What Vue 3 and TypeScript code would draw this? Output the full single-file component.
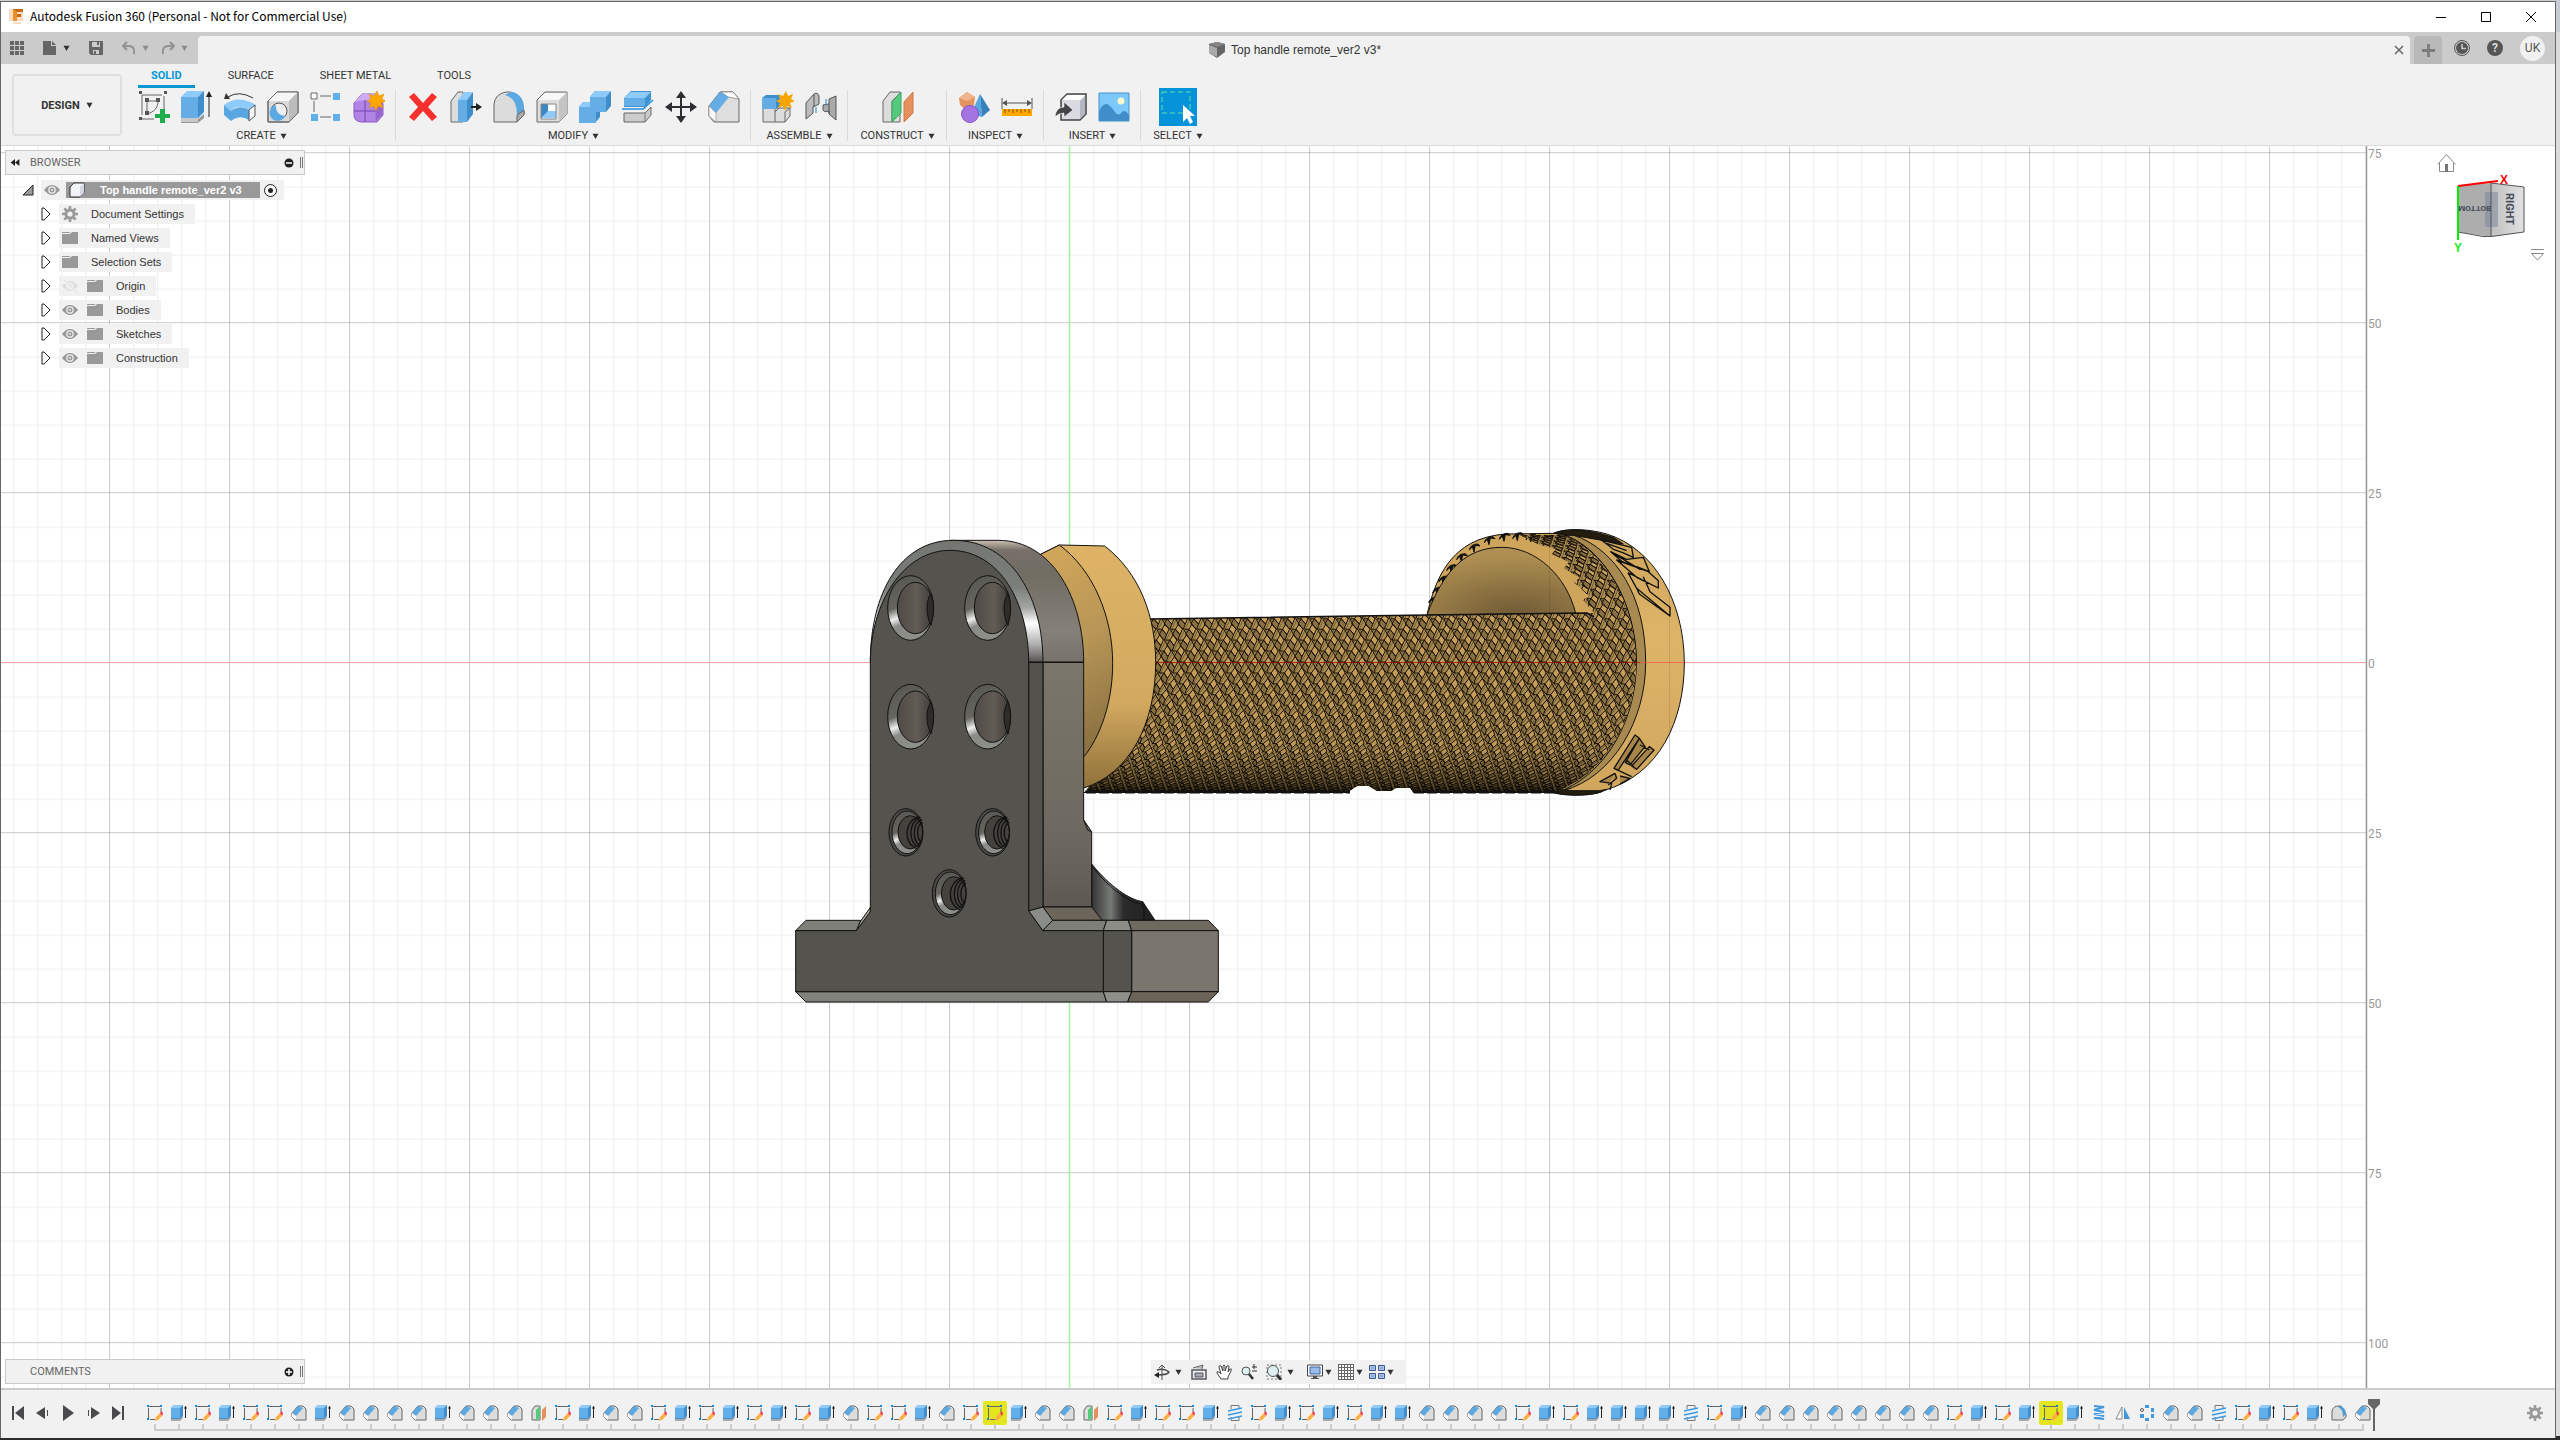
<script setup lang="ts">
interface Tool { id: string; label: string }
interface Group { name: string; tools: Tool[] }
interface TreeRow { label: string; eye: '' | 'eye' | 'eye-off'; icon: string }

const tabs: string[] = ['SOLID', 'SURFACE', 'SHEET METAL', 'TOOLS']

const t = (id: string, label: string): Tool => ({ id, label })
const groups: Group[] = [
  { name: 'CREATE', tools: [t('sketch', 'Create Sketch'), t('extrude', 'Extrude'), t('revolve', 'Revolve'), t('hole', 'Hole'), t('pattern', 'Rectangular Pattern'), t('form', 'Create Form')] },
  { name: 'MODIFY', tools: [t('delete', 'Delete'), t('presspull', 'Press Pull'), t('fillet', 'Fillet'), t('shell', 'Shell'), t('combine', 'Combine'), t('split', 'Split Body'), t('move', 'Move/Copy'), t('chamfer', 'Chamfer')] },
  { name: 'ASSEMBLE', tools: [t('component', 'New Component'), t('joint', 'Joint')] },
  { name: 'CONSTRUCT', tools: [t('plane', 'Offset Plane')] },
  { name: 'INSPECT', tools: [t('solids', 'Interference'), t('measure', 'Measure')] },
  { name: 'INSERT', tools: [t('derive', 'Insert Derive'), t('picture', 'Canvas')] },
  { name: 'SELECT', tools: [t('select', 'Select')] },
]

const rows: TreeRow[] = [
  { label: 'Document Settings', eye: '', icon: 'gear' },
  { label: 'Named Views', eye: '', icon: 'folder' },
  { label: 'Selection Sets', eye: '', icon: 'folder' },
  { label: 'Origin', eye: 'eye-off', icon: 'folder' },
  { label: 'Bodies', eye: 'eye', icon: 'folder' },
  { label: 'Sketches', eye: 'eye', icon: 'folder' },
  { label: 'Construction', eye: 'eye', icon: 'folder' },
]

const kinds: Record<string, string> = {
  S: 't-sketch', H: 't-sketch', E: 't-extrude', C: 't-chamfer', P: 't-plane',
  T: 't-thread', O: 't-coil', M: 't-mirror', R: 't-circular', F: 't-fillet',
}
const features: string[] = [
  ...('SESESSCECCCCECCCPSECCSESESESEC' + 'SSECSHECCPSESSETSESESEECCCCSESEEEETS' + 'ECCCCCCCCSESEHEOMRCCTSESEFC'),
]

const ruler: { y: number; text: string }[] = ['75', '50', '25', '0', '25', '50', '75', '100'].map((text, i) => ({ text, y: 152 + i * 170 }))

// Diamond knurl wrapped around the grip: rows follow the cylinder's curvature.
const radius = 131
const step = 0.084
const pitch = 13.4
const rowAt = (j: number) => {
  const a = Math.max(-1.57, Math.min(1.57, j * step))
  return { y: 662 + radius * Math.sin(a), dx: -68 * (1 - Math.cos(a)) }
}
const p = (x: number, y: number): string => `${x.toFixed(1)} ${y.toFixed(1)}`
let edges = ''
let lights = ''
let darks = ''
let seams = ''
for (let j = -18; j <= 18; j++) {
  const up = rowAt(j - 1)
  const mid = rowAt(j)
  const low = rowAt(j + 1)
  for (let i = 0; i < 44; i++) {
    const base = 1080 + i * pitch + (j % 2 ? pitch / 2 : 0)
    const x = base + mid.dx
    const y = mid.y
    const yt = (up.y + y) / 2
    const yb = (low.y + y) / 2
    const xt = base + (up.dx + mid.dx) / 2 + 1
    const xb = base + (low.dx + mid.dx) / 2 + 1
    const left = p(x - 3, y)
    const right = p(x + 4, y)
    const diamond = `M${left}L${p(xt, yt)}L${right}L${p(xb, yb)}Z`
    const shade = `M${left}L${p(xb, yb)}L${p(xb - 2, low.y)}L${p(x - 6, yb)}Z`
    lights += diamond
    darks += shade
    edges += `${diamond}${shade}M${left}L${p(x - 7, y)}M${p(xt, yt)}L${p(xt - 3, up.y)}`
    seams += `M${p(x + 6.7, y)}L${p(base + low.dx, low.y)}L${p(x - 6.7, y)}`
  }
}

const teeth = [[-22, 235], [-10, 205], [8, 172], [32, 138], [62, 105], [100, 76], [145, 54], [190, 44], [230, 42], [270, 46], [306, 56]]
const bores = [[392, 294], [623, 294], [392, 620], [623, 620]]
const threads = [[378, 967], [638, 967], [508, 1150]]
</script>

<template>
  <div class="desktop">
    <svg class="sprite" width="0" height="0" aria-hidden="true">
      <defs>
        <symbol id="sketch" viewBox="0 0 32 32"><path d="M4 4H26V22M4 4V28H16" fill="none" stroke="#666" stroke-dasharray="20 3" /><path d="M9 10H20C20 17 16 21 9 23Z" fill="none" stroke="#666" /><path d="M1 0h3v3H1zM26 0h3v3h-3zM1 26h3v3H1zM7 7h4v4H7zM18 7h4v4h-4zM7 20h4v4H7z" fill="#555" /><path d="M22 18h5v5h5v4h-5v5h-5v-5h-5v-4h5z" fill="#1fae4c" /></symbol>
        <symbol id="extrude" viewBox="0 0 32 32"><path d="M0 28h17l6-5v4l-6 5H0z" fill="#999" /><path d="M0 27h17v4H0z" fill="#c9c9c9" /><path d="M0 6l6-6h17l-6 6z" fill="#8fcbfa" /><path d="M0 6h17v21H0z" fill="#64ade5" /><path d="M17 6l6-6v21l-6 6z" fill="#3f8ecb" /><path d="M28 26V4" stroke="#222" /><path d="M28 0l3 6h-6z" fill="#222" /></symbol>
        <symbol id="revolve" viewBox="0 0 32 32"><path d="M4 6Q15-1 29 7" fill="none" stroke="#333" /><path d="M0 8l2-6 4 6z" fill="#333" /><path d="M0 14Q14 3 32 14L25 19Q14 12 7 20Z" fill="#8fcbfa" /><path d="M0 14l7 6v10l-7-6zM7 20Q16 13 25 19V29Q16 23 7 30Z" fill="#5aa6e0" /><path d="M25 19l6-5v11l-6 5z" fill="#f5f5f5" stroke="#555" /></symbol>
        <symbol id="hole" viewBox="0 0 32 32"><path d="M1 10L10 1H31V22L22 31H1Z" fill="#d9d9d9" stroke="#666" /><path d="M1 10L10 1H31L22 10Z" fill="#f6f6f6" /><path d="M22 10l9-9v21l-9 9z" fill="#bbb" /><path d="M1 10L10 1H31V22L22 31H1Z" fill="none" stroke="#666" /><circle cx="12" cy="20" r="8" fill="#eee" stroke="#555" /><path d="M9 14a8 8 0 1 0 9 11Q8 24 9 14z" fill="#5ba8e2" /></symbol>
        <symbol id="pattern" viewBox="0 0 32 32"><path d="M10 5H21M4 10V21M10 26H21" stroke="#666" fill="none" /><path d="M1 2h6v6H1z" fill="#fff" stroke="#666" /><path d="M23 2h7v7h-7zM1 23h7v7H1zM23 23h7v7h-7z" fill="#5fb0ea" /></symbol>
        <symbol id="form" viewBox="0 0 32 32"><path d="M1 12L9 3H22Q30 6 30 14V24L24 31H8Q1 30 1 24Z" fill="#b183e4" stroke="#8d5bc7" /><path d="M2 11L9 3H23L18 10Q8 8 2 11Z" fill="#d0abf5" /><path d="M22 12l7-5v17l-6 6z" fill="#9665d0" /><path d="M12 9V31M1 20H23" stroke="#7444b4" /><path d="M24 0l2 5 5-2-2 5 4 2-5 2 2 5-5-2-2 5-2-5-5 2 2-5-4-2 4-2-2-5 5 2z" fill="#ffa600" stroke="#d98c00" stroke-width=".5" /></symbol>
        <symbol id="delete" viewBox="0 0 32 32"><path d="M2 6l5-4 9 10 9-10 5 4-9 10 9 10-5 4-9-10-9 10-5-4 9-10z" fill="#f5302d" /></symbol>
        <symbol id="presspull" viewBox="0 0 32 32"><path d="M1 10L8 1H13V31H1Z" fill="#ddd" stroke="#666" /><path d="M8 9l6-8h9l-6 8z" fill="#8fcbfa" /><path d="M8 9h9v22H8z" fill="#64ade5" /><path d="M17 9l6-8v22l-6 8z" fill="#3f8ecb" /><path d="M21 16h7" stroke="#222" stroke-width="2" /><path d="M26 12l6 4-6 4z" fill="#222" /></symbol>
        <symbol id="fillet" viewBox="0 0 32 32"><path d="M1 13Q2 3 13 1H18L31 20V23L24 31H1Z" fill="#dcdcdc" stroke="#666" /><path d="M12 4Q16 1 20 1Q32 5 31 20L24 24Q24 7 12 4Z" fill="#5ba8e2" /><path d="M24 24l7-5v5l-7 7z" fill="#aaa" stroke="#666" /></symbol>
        <symbol id="shell" viewBox="0 0 32 32"><path d="M1 9L9 1H31V23L23 31H1Z" fill="#ddd" stroke="#666" /><path d="M23 9l8-8v22l-8 8z" fill="#c4c4c4" /><path d="M2 9L9 2H30L23 9Z" fill="#f7f7f7" /><path d="M5 13h15v15H5z" fill="#fff" /><path d="M5 13h7v8l-7 7z" fill="#3c87c3" /><path d="M5 27l7-7h8v7z" fill="#8fcbfa" /><path d="M5 13h15v15H5z" fill="none" stroke="#888" /></symbol>
        <symbol id="combine" viewBox="0 0 32 32"><path d="M0 16l4-5h7V6l5-6h16v15l-5 6h-6v5l-5 6H0z" fill="#3f8ecb" /><path d="M0 16h11V6h16v15H17v11H0z" fill="#64ade5" /><path d="M11 6l5-6h16l-5 6zM0 16l4-5h7v5z" fill="#8fcbfa" /></symbol>
        <symbol id="split" viewBox="0 0 32 32"><path d="M2 7l7-7h20v9l-6 7H2z" fill="#4192d0" /><path d="M2 7h21v8H2z" fill="#64ade5" /><path d="M2 7l7-6h20l-6 6z" fill="#8fcbfa" /><path d="M0 18H21L31 9M0 19" fill="none" stroke="#1e8fe0" stroke-width="1.5" /><path d="M2 22H23L29 16V24L23 31H2Z" fill="#ccc" stroke="#666" /><path d="M23 22V31" stroke="#777" /></symbol>
        <symbol id="move" viewBox="0 0 32 32"><path d="M16 3V29M3 16H29" stroke="#2f2f33" stroke-width="2" /><path d="M16 0l5 7H11zM16 32l5-7H11zM0 16l7-5v10zM32 16l-7-5v10z" fill="#2f2f33" /></symbol>
        <symbol id="chamfer" viewBox="0 0 32 32"><path d="M1 15L12 1H25L31 8V31H6L1 25Z" fill="#dedede" stroke="#666" /><path d="M13 1H25L31 8L20 6Z" fill="#fff" stroke="#666" stroke-width=".6" /><path d="M1 15L12 1L21 6L8 22Z" fill="#64ade5" /><path d="M1 15l7 7v9l-7-6z" fill="#f8f8f8" stroke="#888" stroke-width=".6" /></symbol>
        <symbol id="component" viewBox="0 0 32 32"><path d="M1 17H28V25L23 31H1Z" fill="#ddd" stroke="#666" /><path d="M13 17V31M13 21l4-4M23 31V21l5-4" stroke="#666" fill="none" /><path d="M0 7l4-3h14v11l-4 3H0z" fill="#3f8ecb" /><path d="M0 7h14v11H0z" fill="#64ade5" /><path d="M24 0l2 5 5-2-2 5 4 2-5 2 2 5-5-2-2 5-2-5-5 2 2-5-4-2 4-2-2-5 5 2z" fill="#f7a400" /></symbol>
        <symbol id="joint" viewBox="0 0 32 32"><path d="M1 12L9 3Q13 1 14 5V13L8 16V22L1 28Z" fill="#bcbcbc" stroke="#555" /><path d="M31 5V29L24 23V20Q18 22 18 18V14L24 13V8Z" fill="#aaa" stroke="#555" /><path d="M9 4v12M24 13v10" stroke="#555" /><path d="M11 16v6M21 8v6" stroke="#168dde" /></symbol>
        <symbol id="plane" viewBox="0 0 32 32"><path d="M1 10L8 1H18V31H1Z" fill="#ddd" stroke="#666" /><path d="M10 10V31M10 10L18 2" stroke="#777" fill="none" /><path d="M10 11L19 1V22L10 31Z" fill="#57c97d" stroke="#34a85c" /><path d="M22 11L31 1V22L22 31Z" fill="#e6915d" stroke="#cc7843" /></symbol>
        <symbol id="solids" viewBox="0 0 32 32"><path d="M1 7L9 1L17 6L16 14L8 19L2 14Z" fill="#e59360" /><path d="M1 7l8-6 8 5-8 4z" fill="#f2b48c" /><path d="M22 3L13 23L24 26Z" fill="#58a6df" /><path d="M22 3l10 16-8 7z" fill="#3681bd" /><circle cx="12" cy="23" r="8.5" fill="#a475e0" stroke="#8754c5" /></symbol>
        <symbol id="measure" viewBox="0 0 32 32"><path d="M1 7V18M31 7V18M3 12H29" stroke="#555" /><path d="M1 12l5-3v6zM31 12l-5-3v6z" fill="#555" /><path d="M1 18h30v7H1z" fill="#ffa800" /><path d="M4 18v4M8 18v3M12 18v4M16 18v3M20 18v4M24 18v3M28 18v4" stroke="#7a5000" /></symbol>
        <symbol id="derive" viewBox="0 0 32 32"><path d="M6 9L12 3H31V23L25 29H6Z" fill="#dadbe2" stroke="#444" stroke-width="1.5" /><path d="M7 9L12 4H30L25 9Z" fill="#fff" /><path d="M25 10l5-5v18l-5 5z" fill="#b5b7c2" /><path d="M0 26Q1 16 9 16V11L18 19L9 26V22Q4 22 0 26Z" fill="#444" stroke="#fff" stroke-width=".6" /></symbol>
        <symbol id="picture" viewBox="0 0 32 32"><path d="M1 2h30v28H1z" fill="#7cc8fb" /><path d="M1 20Q5 12 9 13Q12 14 17 21Q20 26 24 21Q27 18 31 24V30H1z" fill="#3f8dc9" /><circle cx="23" cy="10" r="3.5" fill="#fbf7cd" /><path d="M1 2h30v28H1z" fill="none" stroke="#4493cb" /></symbol>
        <symbol id="select" viewBox="0 0 38 38"><path d="M0 0h38v38H0z" fill="#0793da" /><path d="M3 4H31V25H3Z" fill="none" stroke="#5fe0a0" stroke-dasharray="5 3" /><path d="M24 17v17l4-4 3 6 3-2-3-6h5z" fill="#fff" /></symbol>

        <symbol id="caret" viewBox="0 0 8 8"><path d="M0 1h8L4 8z" fill="currentColor" /></symbol>
        <symbol id="eye" viewBox="0 0 16 16"><path d="M0 8Q8-2 16 8Q8 18 0 8Z" fill="#999" /><circle cx="8" cy="8" r="3.8" fill="#f1f1f1" /><circle cx="8" cy="8" r="2.5" fill="#999" /><circle cx="8" cy="8" r="1" fill="#f1f1f1" /></symbol>
        <symbol id="eye-off" viewBox="0 0 16 16"><path d="M0 8Q8-2 16 8Q8 18 0 8Z" fill="#ddd" /><circle cx="8" cy="8" r="3.5" fill="#f1f1f1" /><circle cx="8" cy="8" r="2" fill="#ddd" /><path d="M1 2l13 12" stroke="#f1f1f1" stroke-width="3" /><path d="M2 2l13 13" stroke="#ddd" /></symbol>
        <symbol id="folder" viewBox="0 0 16 16"><path d="M0 2h8v1H0zM0 4h8l2-2h6v12H0z" fill="#999" /></symbol>
        <symbol id="gear" viewBox="0 0 16 16"><path d="M8 0V16M0 8H16M2.3 2.3L13.7 13.7M13.7 2.3L2.3 13.7" stroke="#999" stroke-width="2.6" /><circle cx="8" cy="8" r="5.5" fill="#999" /><circle cx="8" cy="8" r="2.6" fill="#f1f1f1" /></symbol>
        <symbol id="body" viewBox="0 0 16 16"><path d="M1 5L5 1H15V11L11 15H1Z" fill="#f2f3f7" stroke="#333" /><path d="M11 5l4-4v10l-4 4z" fill="#d5d8e0" /></symbol>

        <symbol id="t-sketch" viewBox="0 0 16 16"><path d="M2 1.500H13M1.500 3V13M14 3V8M3 14.500H8" fill="none" stroke="#666" /><path d="M0 0h2v2H0zM13 0h2v2h-2zM0 13h2v2H0z" fill="#1187dc" /><path d="M8 16l1-4 4-4 2 3-4 4z" fill="#fbb040" /><path d="M13 8l2-2 1 3-1 2z" fill="#f33c4d" /></symbol>
        <symbol id="t-extrude" viewBox="0 0 16 16"><path d="M0 14h9l3-3v2l-3 3H0z" fill="#aaa" /><path d="M0 3l3-3h9v11l-3 3H0z" fill="#3f8ecb" /><path d="M0 3h9v10H0z" fill="#62aee8" /><path d="M0 3l3-3h9L9 3z" fill="#8fcbfa" /><path d="M14.500 1V13M13 3h3" stroke="#222" /></symbol>
        <symbol id="t-chamfer" viewBox="0 0 16 16"><path d="M1 8L7 1H12L15 4V15H4L1 12Z" fill="#dcdcdc" stroke="#666" /><path d="M1 8l6-7 5 2-7 8z" fill="#5ba8e2" /><path d="M1 8l4 3v4l-4-3z" fill="#f8f8f8" /></symbol>
        <symbol id="t-fillet" viewBox="0 0 16 16"><path d="M1 6Q2 1 8 1H10L15 9V12L12 15H1Z" fill="#dcdcdc" stroke="#666" /><path d="M7 2L9 1Q15 3 15 9L12 12Q12 4 7 2Z" fill="#4a9bd8" /></symbol>
        <symbol id="t-plane" viewBox="0 0 16 16"><path d="M1 5L4 1H9V15H1Z" fill="#ddd" stroke="#666" /><path d="M5 5l4-4v11l-4 4z" fill="#57c97d" /><path d="M11 5l4-4v11l-4 4z" fill="#e6915d" /></symbol>
        <symbol id="t-thread" viewBox="0 0 16 16"><path d="M4 .5H12V4M4 .5V4M4 12V15.500H12V12" fill="none" stroke="#777" /><path d="M1 6L15 3M1 10L15 7M1 14L15 11" stroke="#379be8" stroke-width="1.500" /></symbol>
        <symbol id="t-coil" viewBox="0 0 16 16"><path d="M3 1L13 2L3 5L13 7L3 9L13 11L3 13L13 14" fill="none" stroke="#449add" stroke-width="2" /></symbol>
        <symbol id="t-mirror" viewBox="0 0 16 16"><path d="M1 14L7 2V14Z" fill="#fff" stroke="#888" /><path d="M15 14L9 2V14Z" fill="#4496d7" /></symbol>
        <symbol id="t-circular" viewBox="0 0 16 16"><circle cx="3" cy="5" r="1.500" fill="#fff" stroke="#555" /><path d="M6 0h4v3H6zM12 3h3v4h-3zM12 9h3v4h-3zM6 13h4v3H6zM1 9h4v4H1z" fill="#449add" /></symbol>

        <symbol id="n-orbit" viewBox="0 0 16 16"><path d="M8 1V16M5 4l3-3 3 3" stroke="#555" fill="#fff" /><path d="M3 6Q10 4 15 8Q14 11 3 11" fill="none" stroke="#444" stroke-width="1.500" /><path d="M0 11l5-3v6z" fill="#222" /></symbol>
        <symbol id="n-look" viewBox="0 0 16 16"><path d="M1 6H15V15H1Z" fill="#eee" stroke="#55565f" stroke-width="1.500" /><path d="M4 9h8v4H4z" fill="#a7a8b4" stroke="#55565f" /><path d="M2 4L12 1L11 5" fill="#bbb" stroke="#666" /></symbol>
        <symbol id="n-hand" viewBox="0 0 16 16"><path d="M5 15L1 9Q0 7 3 8L5 10L3 3Q3 1 5 2L7 7V2Q8 0 9 2V7L11 2Q13 1 13 3L12 8L14 5Q16 4 15 7L12 13V15Z" fill="#fff" stroke="#444" /></symbol>
        <symbol id="n-zoom" viewBox="0 0 16 16"><circle cx="5" cy="7" r="4" fill="#dcf0f2" stroke="#555" /><path d="M8 10l4 5" stroke="#333" stroke-width="2.500" /><path d="M13 0v5M11 3h5M11 7h5" stroke="#333" /></symbol>
        <symbol id="n-window" viewBox="0 0 16 16"><path d="M1 1H15V15H1Z" fill="none" stroke="#777" stroke-dasharray="2 2" /><circle cx="7" cy="7" r="5.500" fill="#dcf0f2" stroke="#555" /><path d="M11 11l4 5" stroke="#333" stroke-width="3" /></symbol>
        <symbol id="n-display" viewBox="0 0 16 16"><path d="M.5 1h15v11H.5z" fill="#fff" stroke="#444" /><path d="M3 3h10v7H3z" fill="#9abce9" stroke="#3f62a4" /><path d="M6 12h4v2h2v1H4v-1h2z" fill="#555" /></symbol>
        <symbol id="n-grid" viewBox="0 0 16 16"><path d="M0 0h16v16H0z" fill="#fff" /><path d="M0 .5H16M0 3.500H16M0 6.500H16M0 9.500H16M0 12.500H16M0 15.500H16M.5 0V16M3.500 0V16M6.500 0V16M9.500 0V16M12.500 0V16M15.500 0V16" stroke="#666" /></symbol>
        <symbol id="n-views" viewBox="0 0 16 16"><path d="M.5 1.500h6v5h-6zM9.500 1.500h6v5h-6zM.5 9.500h6v5h-6zM9.500 9.500h6v5h-6z" fill="#adc7ec" stroke="#3c568b" /><path d="M2 4h3M11 4h3M2 12h3M11 12h3" stroke="#6685b8" /></symbol>
      </defs>
    </svg>

    <div class="window">
      <header class="titlebar">
        <svg class="logo" viewBox="0 0 16 16"><path d="M0 0h14v12H0z" fill="#fbdcc1" /><path d="M4 0h10v3H8v2h4v3H8v4H4z" fill="#c66a16" /><path d="M4 0l4 3v9H4z" fill="#ee8e2c" /><path d="M4 14h8" stroke="#f4b98a" /></svg>
        <h1>Autodesk Fusion 360 (Personal - Not for Commercial Use)</h1>
        <div class="winbtns">
          <button aria-label="Minimize"><svg viewBox="0 0 10 10"><path d="M0 5.500H10" stroke="#000" /></svg></button>
          <button aria-label="Maximize"><svg viewBox="0 0 10 10"><path d="M.5.5h9v9h-9z" fill="none" stroke="#000" /></svg></button>
          <button aria-label="Close"><svg viewBox="0 0 10 10"><path d="M0 0L10 10M10 0L0 10" stroke="#000" /></svg></button>
        </div>
      </header>

      <div class="tabbar">
        <div class="quick">
          <button aria-label="Data panel"><svg class="q" viewBox="0 0 14 14"><path d="M0 0h4v4H0zM5 0h4v4H5zM10 0h4v4h-4zM0 5h4v4H0zM5 5h4v4H5zM10 5h4v4h-4zM0 10h4v4H0zM5 10h4v4H5zM10 10h4v4h-4z" fill="#666" /></svg></button>
          <button aria-label="File"><svg class="q" viewBox="0 0 14 14"><path d="M0 0h8v5h5v9H0zM9 0l4 4H9z" fill="#666" /></svg><svg class="c"><use href="#caret" /></svg></button>
          <button aria-label="Save"><svg class="q" viewBox="0 0 14 14"><path d="M0 0h14v14H2l-2-2z" fill="#666" /><path d="M3 1h8v5H3zM4 9h6v4H4z" fill="#ccc" /><path d="M8 1h2v3H8zM5 10h2v3H5z" fill="#666" /></svg></button>
          <button class="dim" aria-label="Undo"><svg class="q" viewBox="0 0 14 14"><path d="M1 5H7Q13 5 12 13M5 1L1 5l4 4" fill="none" stroke="#929292" stroke-width="2" /></svg><svg class="c"><use href="#caret" /></svg></button>
          <button class="dim" aria-label="Redo"><svg class="q" viewBox="0 0 14 14"><path d="M13 5H7Q1 5 2 13M9 1l4 4-4 4" fill="none" stroke="#929292" stroke-width="2" /></svg><svg class="c"><use href="#caret" /></svg></button>
        </div>
        <div class="doctab">
          <span class="docname"><svg viewBox="0 0 16 16"><path d="M0 2L8 0l8 2v8l-8 6-8-5z" fill="#666" /><path d="M0 3l8 3v9l-8-4z" fill="#aaa" /><path d="M0 2l8-2 8 2-8 3z" fill="#858585" /></svg>Top handle remote_ver2 v3*</span>
          <button aria-label="Close tab"><svg viewBox="0 0 10 10"><path d="M1 1L9 9M9 1L1 9" stroke="#666" stroke-width="1.500" /></svg></button>
        </div>
        <button class="plus" aria-label="New design"><svg viewBox="0 0 14 14"><path d="M7 0V14M0 7H14" stroke="#7b7b7b" stroke-width="3" /></svg></button>
        <div class="account">
          <button aria-label="Job status"><svg class="round" viewBox="0 0 16 16"><circle cx="8" cy="8" r="7.500" fill="none" stroke="#555" /><circle cx="8" cy="8" r="6" fill="#555" /><path d="M8 4V8.500H12" fill="none" stroke="#ccc" stroke-width="1.500" /></svg></button>
          <button aria-label="Help" class="help">?</button>
          <button class="avatar">UK</button>
        </div>
      </div>

      <div class="ribbon">
        <button class="design">DESIGN<svg class="c"><use href="#caret" /></svg></button>
        <div class="ribbon-main">
          <nav class="tabs"><button v-for="(tab, i) in tabs" :key="tab" :class="{ on: i === 0 }">{{ tab }}</button></nav>
          <div class="groups">
            <section v-for="g in groups" :key="g.name" class="group" :class="g.name.toLowerCase()">
              <div class="icons">
                <button v-for="tool in g.tools" :key="tool.id" :aria-label="tool.label" :class="{ big: tool.id === 'select' }"><svg><use :href="'#' + tool.id" /></svg></button>
              </div>
              <button class="glabel">{{ g.name }}<svg class="c"><use href="#caret" /></svg></button>
            </section>
          </div>
        </div>
      </div>

      <main class="canvas">
        <svg class="scene" viewBox="1 146 2554 1242" preserveAspectRatio="xMinYMin slice">
          <defs>
            <pattern id="minor" x="13" y="16.500" width="24" height="34" patternUnits="userSpaceOnUse"><path d="M.5 0V34M0 .5H24" stroke="#000" stroke-opacity=".055" stroke-width="1.500" /></pattern>
            <pattern id="major" x="109" y="152" width="120" height="170" patternUnits="userSpaceOnUse"><path d="M.5 0V170M0 .5H120" stroke="#000" stroke-opacity=".15" /></pattern>
            <linearGradient id="goldR" x1="0" y1="0" x2="0" y2="1"><stop offset="0" stop-color="#cda45a" /><stop offset=".4" stop-color="#ddb468" /><stop offset="1" stop-color="#cfa65c" /></linearGradient>
            <linearGradient id="goldD" x1="0" y1="0" x2="0" y2="1"><stop offset="0" stop-color="#deb366" /><stop offset=".65" stop-color="#d2a95f" /><stop offset="1" stop-color="#8f713a" /></linearGradient>
            <linearGradient id="goldI" x1=".2" y1="0" x2=".4" y2="1"><stop offset="0" stop-color="#d1a659" /><stop offset=".5" stop-color="#b89656" /><stop offset="1" stop-color="#8c7242" /></linearGradient>
            <radialGradient id="hood" cx=".6" cy="1" r=".9"><stop offset="0" stop-color="#6f5a35" /><stop offset=".7" stop-color="#9c8049" /><stop offset="1" stop-color="#b08f52" /></radialGradient>
            <linearGradient id="rod" x1="0" y1="0" x2="0" y2="1"><stop offset="0" stop-color="#000" stop-opacity="0" /><stop offset=".75" stop-color="#000" stop-opacity=".04" /><stop offset="1" stop-color="#000" stop-opacity=".55" /></linearGradient>
            <linearGradient id="arch" x1="0" y1="0" x2="0" y2="1"><stop offset="0" stop-color="#c9beb0" /><stop offset=".08" stop-color="#77706a" /><stop offset=".28" stop-color="#716d62" /><stop offset=".75" stop-color="#85807a" /><stop offset="1" stop-color="#76726a" /></linearGradient>
            <linearGradient id="side" x1="0" y1="0" x2="0" y2="1"><stop offset="0" stop-color="#7a766c" /><stop offset=".7" stop-color="#6d6960" /><stop offset="1" stop-color="#5e5852" /></linearGradient>
            <linearGradient id="bevel" x1="0" y1="0" x2="0" y2="1"><stop offset="0" stop-color="#747672" /><stop offset=".38" stop-color="#7a7e78" /><stop offset=".55" stop-color="#a2a4a0" /><stop offset=".68" stop-color="#fff" /><stop offset=".85" stop-color="#b0b0b0" /><stop offset="1" stop-color="#55534f" /></linearGradient>
            <linearGradient id="rim" x1="0" y1="0" x2=".3" y2="1"><stop offset="0" stop-color="#55544f" /><stop offset=".5" stop-color="#66665f" /><stop offset=".66" stop-color="#eee" /><stop offset=".78" stop-color="#8a8b86" /><stop offset="1" stop-color="#8c8e88" /></linearGradient>
            <linearGradient id="bore"><stop offset="0" stop-color="#4e4a45" /><stop offset=".55" stop-color="#625c55" /><stop offset="1" stop-color="#3c3935" /></linearGradient>
            <linearGradient id="rear"><stop offset="0" stop-color="#333" /><stop offset=".3" stop-color="#777a76" /><stop offset=".5" stop-color="#2b2b2b" /><stop offset="1" stop-color="#1f1f1e" /></linearGradient>
            <clipPath id="gripclip"><path d="M1084 793L1120 750L1150 619L1427 615L1594 613L1583 600L1589 596L1574 582L1580 578L1564 568L1569 562L1552 554L1556 549L1538 544L1520 535L1562 535C1603 550 1636 603 1636 662C1636 720 1607 770 1560 790L1556 793H1414l-4-5h-14l-5 3h-14l-8-5h-12l-6 4l-6 3H1084z" /></clipPath>
          </defs>

          <path d="M0 146H2366V1388H0Z" fill="url(#minor)" />
          <path d="M0 146H2366V1388H0Z" fill="url(#major)" />
          <path d="M1069.500 146V1388" stroke="#a2f59f" stroke-width="1.500" />
          <path d="M0 662.500H2366" stroke="#f3a1a1" />
          <path d="M2366.500 146V1388" stroke="#999" stroke-width="1.500" />

          <!-- end cap -->
          <g transform="translate(1440 520) scale(.33333)" stroke="#111" stroke-width="3" stroke-linejoin="round">
            <path d="M345 38C380 25 440 25 500 42C640 85 732 240 733 428C733 600 660 765 490 812C470 828 380 830 338 816Z" fill="url(#goldR)" />
            <path d="M400 45C530 90 617 230 617 428C617 600 520 770 370 812L200 800L200 60Z" fill="#a88a50" />
            <path d="M-39 285C-15 180 30 52 200 42L345 40C490 70 589 250 589 428L400 500L0 300Z" fill="#cfa55b" />
            <path v-for="(h, i) in teeth" :key="'t' + i" :transform="`translate(${h[0]} ${h[1]})`" d="M-12 14Q-8 -4 14 -4L20 2L6 0L2 20L-3 4Z" fill="#111" />
            <path d="M365 42C490 80 589 250 589 428C589 600 500 750 375 808" fill="none" />
            <path d="M-39 285C10 150 80 82 185 82C290 82 380 170 407 280Z" fill="url(#hood)" />
            <path d="M340 40C380 24 440 26 520 52L550 72L480 60L400 46Z" fill="#221b0e" />
            <path d="M338 806L400 812L480 812L500 808C470 828 380 830 338 818Z" fill="#221b0e" />
            <path d="M484 60L575 82L580 112L548 98L520 88L500 72ZM512 95L560 118L610 112L628 155L590 140L545 124ZM530 120L625 155L655 182V204L590 172ZM564 158L655 204M564 158L590 205L690 288V262L630 215L610 170M590 205L598 222L690 288M500 70L560 92M520 100L600 148" fill="none" stroke-width="4" />
            <path d="M585 645L598 655L535 750L522 745ZM598 655L615 680L570 735L556 728ZM628 680L642 690L590 748L575 738ZM600 675L628 690M560 720L585 745M522 745L575 770M525 760L480 785L515 790L510 810M525 760L530 775L505 795M540 768L570 775L540 792" fill="#a88649" stroke-width="4" />
          </g>

          <!-- knurled grip -->
          <g clip-path="url(#gripclip)">
            <path d="M1070 530H1650V800H1070Z" fill="#ae8e50" />
            <path :d="seams" fill="none" stroke="#2a2112" stroke-opacity=".45" />
            <path :d="darks" fill="#8a7040" />
            <path :d="lights" fill="#c9a05a" />
            <path :d="edges" fill="none" stroke="#16110a" stroke-width="1" />
            <path d="M1070 613H1650V796H1070Z" fill="url(#rod)" />
          </g>
          <path d="M1150 619L1427 615L1587 613L1594 617M1086 792H1350M1414 792H1560" stroke="#111" stroke-width="1.500" fill="none" />
          <path d="M1086 792H1350M1414 792H1556" stroke="#111" stroke-width="3" stroke-dasharray="10 3" />

          <g transform="translate(780 510) scale(.33333)" stroke="#111" stroke-width="3" stroke-linejoin="round">
            <!-- front collar -->
            <path d="M778 135L838 105L974 108C1080 190 1127 320 1127 458C1127 640 1050 790 912 834L850 700Z" fill="url(#goldD)" />
            <path d="M778 135L838 105C940 180 998 320 998 460C998 580 960 680 912 740L850 700Z" fill="url(#goldI)" />
            <!-- bracket -->
            <path d="M935 1062C990 1130 1050 1170 1088 1175L1125 1231H935Z" fill="url(#rear)" />
            <path d="M935 1068C990 1138 1050 1178 1082 1181L1092 1190V1231M1088 1175V1190" fill="none" />
            <path d="M510 91H655C820 91 911 270 911 457H700Z" fill="url(#arch)" />
            <path d="M271 457C271 250 360 91 520 91C700 91 789 270 789 457Z" fill="url(#bevel)" />
            <path d="M789 457H911V930L935 965V1191H789Z" fill="url(#side)" />
            <path d="M911 930L923 960L935 965" fill="none" />
            <path d="M746 457H789V1191L746 1203Z" fill="#54524c" />
            <path d="M789 1191H935L967 1231H818Z" fill="#6b655a" />
            <path d="M746 1203L789 1191L818 1231L788 1262Z" fill="#8a8d87" />
            <path d="M271 1192V1210L229 1262L240 1236Z" fill="#aaa79d" />
            <path d="M47 1262L78 1231H242L229 1262ZM788 1262L818 1231H980L970 1262Z" fill="#7e7f79" />
            <path d="M970 1262L980 1231H1045L1055 1262Z" fill="#8b8d86" />
            <path d="M1055 1262L1045 1231H1285L1315 1262Z" fill="#6f6a60" />
            <path d="M1055 1262H1315V1445H1055Z" fill="#7b766d" />
            <path d="M970 1262H1055V1445H970Z" fill="#55534e" />
            <path d="M47 1445L78 1476H980L970 1445Z" fill="#80827b" />
            <path d="M970 1445L980 1476H1043L1055 1445Z" fill="#8e9089" />
            <path d="M1055 1445L1043 1476H1285L1315 1445Z" fill="#6a6557" />
            <path d="M271 457C271 280 370 121 510 121C660 121 746 280 746 457V1203L788 1262H970V1445H47V1262H229L271 1205Z" fill="#55534d" />
            <path d="M746 457H911" stroke-width="4" />
            <g v-for="(b, i) in bores" :key="'b' + i" :transform="`translate(${b[0]} ${b[1]})`">
              <ellipse rx="69" ry="97" fill="url(#rim)" />
              <ellipse cx="14" cy="0" rx="54" ry="77" fill="url(#bore)" />
              <path d="M61 -44C45 -20 45 20 61 52Q69 20 69 0Q68 -24 61 -44Z" fill="#2f2d2a" />
            </g>
            <g v-for="(h, i) in threads" :key="'h' + i" :transform="`translate(${h[0]} ${h[1]})`">
              <ellipse rx="51" ry="71" fill="#4a4945" />
              <ellipse cx="3" rx="45" ry="64" fill="url(#rim)" />
              <ellipse cx="13" rx="37" ry="50" fill="#45423d" />
              <path d="M40 -48C-8 -35 -8 35 32 48M44 -45C6 -35 6 35 38 44M48 -38C18 -30 18 30 43 40M50 -30C30 -22 30 22 48 30" fill="none" stroke-width="4" />
            </g>
          </g>
          <path d="M1156 662.500H1640" stroke="#900" stroke-opacity=".7" />
          <path d="M1640 662.500H1684" stroke="#f44" stroke-opacity=".6" />
          <path d="M1549.500 532V792M1669.500 590V735" stroke="#000" stroke-opacity=".1" />

          <text v-for="(r, i) in ruler" :key="i" class="tick" x="2368" :y="r.y + 6">{{ r.text }}</text>
        </svg>

        <aside class="browser">
          <div class="panel">
            <svg class="collapse" viewBox="0 0 10 8"><path d="M5 0v8L0 4zM10 0v8L5 4z" fill="#222" /></svg>
            <h2>BROWSER</h2>
            <svg class="dot" viewBox="0 0 10 10"><circle cx="5" cy="5" r="4.500" fill="#222" /><path d="M2 5H8" stroke="#fff" stroke-width="1.500" /></svg>
            <i class="grip"></i>
          </div>
          <ul class="tree">
            <li class="root">
              <svg class="open" viewBox="0 0 12 12"><path d="M1 11L11 1V11Z" fill="#999" stroke="#222" /></svg>
              <div class="cell">
                <svg class="ic"><use href="#eye" /></svg>
                <span class="sel"><svg class="ic"><use href="#body" /></svg><b>Top handle remote_ver2 v3</b></span>
                <input type="radio" checked aria-label="Activate component" />
              </div>
            </li>
            <li v-for="row in rows" :key="row.label">
              <svg class="shut" viewBox="0 0 10 14"><path d="M1 1H3L9 7L3 13H1Z" fill="#fff" stroke="#222" /></svg>
              <div class="cell">
                <svg v-if="row.eye" class="ic"><use :href="'#' + row.eye" /></svg>
                <svg class="ic"><use :href="'#' + row.icon" /></svg>
                <span>{{ row.label }}</span>
              </div>
            </li>
          </ul>
        </aside>

        <div class="panel comments">
          <h2>COMMENTS</h2>
          <svg class="dot" viewBox="0 0 10 10"><circle cx="5" cy="5" r="4.500" fill="#222" /><path d="M2 5H8M5 2V8" stroke="#fff" stroke-width="1.500" /></svg>
          <i class="grip"></i>
        </div>

        <svg class="cube" viewBox="2430 146 120 124">
          <defs><linearGradient id="cr"><stop offset="0" stop-color="#bfbfbf" /><stop offset="1" stop-color="#e2e2e2" /></linearGradient></defs>
          <path d="M2437.500 164.500L2446.500 154.500L2455.500 164.500M2439.500 163V171.500H2453.500V163" fill="none" stroke="#888" /><path d="M2445 164h3v8h-3z" fill="#777" />
          <path d="M2458 186L2491 183V237L2458 232Z" fill="#adadad" />
          <path d="M2491 183L2524 187V232L2491 237Z" fill="url(#cr)" />
          <path d="M2485 192h13v35h-13z" fill="#6e7f98" fill-opacity=".45" />
          <path d="M2458 232L2483 236.500H2491L2524 232V187L2491 183V237" fill="none" stroke="#555" />
          <path d="M2458 186L2498 181" stroke="#f00" stroke-width="2" /><path d="M2458 186V240" stroke="#0e0" stroke-width="2" />
          <text class="axis" x="2500" y="184" fill="#f00">X</text><text class="axis" x="2454" y="252" fill="#2e2">Y</text>
          <text class="face small" transform="translate(2491 206) rotate(180)">BOTTOM</text>
          <text class="face" transform="translate(2506 193) rotate(90)">RIGHT</text>
          <path d="M2531 249.500H2544M2531.500 253.500H2543.500L2537.500 260Z" fill="none" stroke="#888" />
        </svg>

        <div class="navbar">
          <button aria-label="Orbit"><svg class="ic"><use href="#n-orbit" /></svg><svg class="c"><use href="#caret" /></svg></button>
          <button aria-label="Look At"><svg class="ic"><use href="#n-look" /></svg></button>
          <button aria-label="Pan"><svg class="ic"><use href="#n-hand" /></svg></button>
          <button aria-label="Zoom"><svg class="ic"><use href="#n-zoom" /></svg></button>
          <button aria-label="Zoom Window"><svg class="ic"><use href="#n-window" /></svg><svg class="c"><use href="#caret" /></svg></button>
          <span class="tight">
            <button aria-label="Display Settings"><svg class="ic"><use href="#n-display" /></svg><svg class="c"><use href="#caret" /></svg></button>
            <button aria-label="Grid and Snaps"><svg class="ic"><use href="#n-grid" /></svg><svg class="c"><use href="#caret" /></svg></button>
            <button aria-label="Viewports"><svg class="ic"><use href="#n-views" /></svg><svg class="c"><use href="#caret" /></svg></button>
          </span>
        </div>
      </main>

      <footer class="timeline">
        <div class="play">
          <button aria-label="Go to start"><svg viewBox="0 0 16 16"><path d="M2 1h2v14H2zM14 1v14L5 8z" fill="#4a4a4d" /></svg></button>
          <button aria-label="Step back"><svg viewBox="0 0 16 16"><path d="M10 2v12L1 8zM12 5h1v6h-1z" fill="#4a4a4d" /></svg></button>
          <button aria-label="Play"><svg viewBox="0 0 16 16"><path d="M3 0v16l11-8z" fill="#4a4a4d" /></svg></button>
          <button aria-label="Step forward"><svg viewBox="0 0 16 16"><path d="M6 2v12l9-6zM3 5h1v6H3z" fill="#4a4a4d" /></svg></button>
          <button aria-label="Go to end"><svg viewBox="0 0 16 16"><path d="M12 1h2v14h-2zM2 1v14l9-7z" fill="#4a4a4d" /></svg></button>
        </div>
        <ol class="features">
          <li v-for="(k, i) in features" :key="i" :class="{ hl: k === 'H' }"><svg class="ic"><use :href="'#' + kinds[k]" /></svg></li>
        </ol>
        <svg class="marker" viewBox="0 0 12 32"><path d="M0 0h12v5L7 10v22H5V10L0 5z" fill="#666" /></svg>
        <button class="settings" aria-label="Timeline settings"><svg class="ic"><use href="#gear" /></svg></button>
      </footer>
    </div>
  </div>
</template>

<style>
body { margin: 0; }
</style>

<style scoped>
.desktop { display: flex; min-height: 100vh; box-sizing: border-box; padding: 1px 4px 2px 0; background: linear-gradient(#c9ccd3 0 32px, #dcdcdc 32px 1436px, #2e2b2e 1436px); font-family: Roboto, "Liberation Sans", sans-serif; font-size: 11px; color: #333; }
.sprite { position: absolute; }
.window { flex: 1; min-width: 0; display: flex; flex-direction: column; border: 1px solid #666; border-bottom: 0; background: #fff; }
button { border: 0; padding: 0; margin: 0; background: none; font: inherit; color: inherit; display: flex; align-items: center; justify-content: center; }
svg { display: block; flex: none; }
.c { width: 7px; height: 6px; color: #333; }
.ic { width: 16px; height: 16px; }
h1, h2, ul, ol { margin: 0; padding: 0; font-weight: 400; list-style: none; }

.titlebar { display: flex; align-items: center; height: 30px; padding-left: 8px; }
.logo { width: 16px; height: 16px; }
h1 { margin: 0 0 2px 5px; font: 12px/16px "Noto Sans CJK KR", "Noto Sans", sans-serif; color: #000; white-space: nowrap; }
.winbtns { display: flex; margin: 0 2px 0 auto; }
.winbtns button { width: 45px; height: 28px; }
.winbtns svg { width: 10px; height: 10px; }

.tabbar { display: flex; height: 32px; background: #cbcbcb; }
.quick { display: flex; align-items: center; gap: 19px; width: 188px; padding-left: 9px; }
.quick button { gap: 6px; }
.quick .dim { margin-right: -7px; }
.q { width: 14px; height: 14px; }
.dim .c { color: #8a8a8a; }
.doctab { flex: 1; display: flex; align-items: center; margin-top: 4px; border-radius: 4px 4px 0 0; background: #f1f1f1; padding: 0 6px; }
.docname { flex: 1; display: flex; align-items: center; justify-content: center; gap: 6px; padding-right: 8px; font: 12px "Liberation Sans", Arial, sans-serif; }
.docname svg { width: 16px; height: 16px; }
.doctab button svg { width: 10px; height: 10px; }
.plus { width: 28px; margin: 4px 0 0 4px; border-radius: 4px 4px 0 0; background: #b9b9b9; }
.plus svg { width: 13px; height: 13px; }
.account { display: flex; align-items: center; gap: 17px; padding: 0 10px 0 12px; }
.round { width: 16px; height: 16px; }
.help { width: 16px; height: 16px; border-radius: 50%; background: #555; color: #ddd; font-weight: 700; font-size: 12px; }
.avatar { width: 25px; height: 25px; border-radius: 50%; background: #f1f1f1; font-size: 12px; color: #555; }

.ribbon { display: flex; height: 81px; border-bottom: 1px solid #dadada; background: #f1f1f1; }
.design { width: 110px; height: 62px; box-sizing: border-box; margin: 10px 16px 0 11px; border: 2px solid #dfdfdf; border-radius: 4px; font-weight: 700; gap: 6px; }
.tabs { display: flex; gap: 20px; height: 24px; }
.tabs button { height: 24px; padding: 2px 13px 0; border-bottom: 3px solid transparent; box-sizing: border-box; }
.tabs .on { color: #0896d7; font-weight: 700; border-color: #0896d7; }
.groups { display: flex; padding-top: 2px; }
.group { display: flex; flex-direction: column; align-items: center; min-width: 75px; height: 51px; padding: 0 10px 0 11px; border-right: 1px solid #dadada; }
.group.create { padding-left: 0; }
.group.construct { min-width: 77px; }
.group.select { border: 0; min-width: 52px; }
.icons { display: flex; align-items: flex-start; gap: 11px; height: 36px; flex: none; }
.icons svg { width: 32px; height: 32px; }
.icons button { height: 34px; }
.icons .big { margin-top: -2px; height: 38px; }
.icons .big svg { width: 38px; height: 38px; }
.glabel { flex: none; gap: 4px; height: 16px; line-height: 16px; margin-top: 2px; white-space: nowrap; }

.canvas { position: relative; flex: 1; overflow: hidden; background: #fff; display: flex; flex-direction: column; justify-content: space-between; align-items: flex-start; padding: 4px 4px; }
.scene { position: absolute; inset: 0; width: 100%; height: 100%; }
.tick { font: 12px Roboto, sans-serif; fill: #999; }
.browser, .comments { position: relative; }
.panel { display: flex; align-items: center; box-sizing: border-box; width: 300px; height: 25px; padding: 0 1px 0 4px; border: 1px solid #c8c8c8; background: #f1f1f1; }
.collapse { width: 10px; height: 7px; margin-right: 10px; }
h2 { flex: 1; font-size: 11px; line-height: 16px; color: #666; }
.dot { width: 10px; height: 10px; }
.grip { width: 1px; height: 11px; margin-left: 6px; border: solid #777; border-width: 0 1px; }
.comments h2 { padding-left: 20px; }

.tree { padding: 5px 0 0 17px; font: 11px/20px "Liberation Sans", Arial, sans-serif; }
.tree li { display: flex; align-items: center; height: 20px; margin-bottom: 4px; padding-left: 19px; }
.tree .root { padding-left: 0; }
.open { width: 12px; height: 12px; margin-right: 7px; }
.shut { width: 10px; height: 14px; margin-right: 8px; }
.cell { display: flex; align-items: center; gap: 9px; height: 20px; padding: 0 11px 0 3px; background: #f1f1f1; }
.cell span { padding-left: 4px; white-space: nowrap; }
.root .cell { gap: 4px; padding-right: 7px; }
.root .sel { display: flex; align-items: center; gap: 15px; height: 16px; padding: 0 18px 0 3px; margin-left: 2px; background: #999; color: #fff; line-height: 16px; }
.root input { appearance: none; width: 13px; height: 13px; margin: 0; border: 1px solid #222; border-radius: 50%; background: radial-gradient(#222 0 2px, #fff 3px); }

.cube { position: absolute; top: 0; right: 5px; width: 120px; height: 124px; }
.axis { font: 700 12px "Liberation Sans", sans-serif; }
.face { font: 700 11px Roboto, sans-serif; fill: #444b57; }
.small { font-size: 8px; }

.navbar { position: absolute; left: 50%; bottom: 4px; transform: translateX(-50%); display: flex; align-items: center; gap: 9px; height: 24px; box-sizing: border-box; padding: 0 11px 0 3px; background: #f1f1f1; }
.navbar button { gap: 5px; }
.tight { display: flex; gap: 6px; margin-left: 4px; }
.navbar .tight button { gap: 2px; }

.timeline { display: flex; height: 48px; border-top: 2px solid #cbcbcb; background: #f1f1f1; }
.play { display: flex; gap: 9px; padding: 15px 17px 0 9px; height: 16px; }
.play svg { width: 16px; height: 16px; }
.features { display: flex; padding-top: 11px; }
.features li { position: relative; display: flex; justify-content: center; align-items: center; width: 24px; height: 24px; border-radius: 2px; flex: none; }
.features li::after { content: ""; position: absolute; left: 11px; top: 23px; width: 24px; height: 5px; border: solid #cbcbcb; border-width: 0 0 2px 2px; }
.features li:last-child::after { width: 0; border-bottom: 0; height: 7px; }
.features .hl { background: #e5e51f; }
.marker { width: 12px; height: 32px; margin: 9px 0 0 -7px; }
.settings { margin: 15px 12px 0 auto; height: 16px; }
</style>
